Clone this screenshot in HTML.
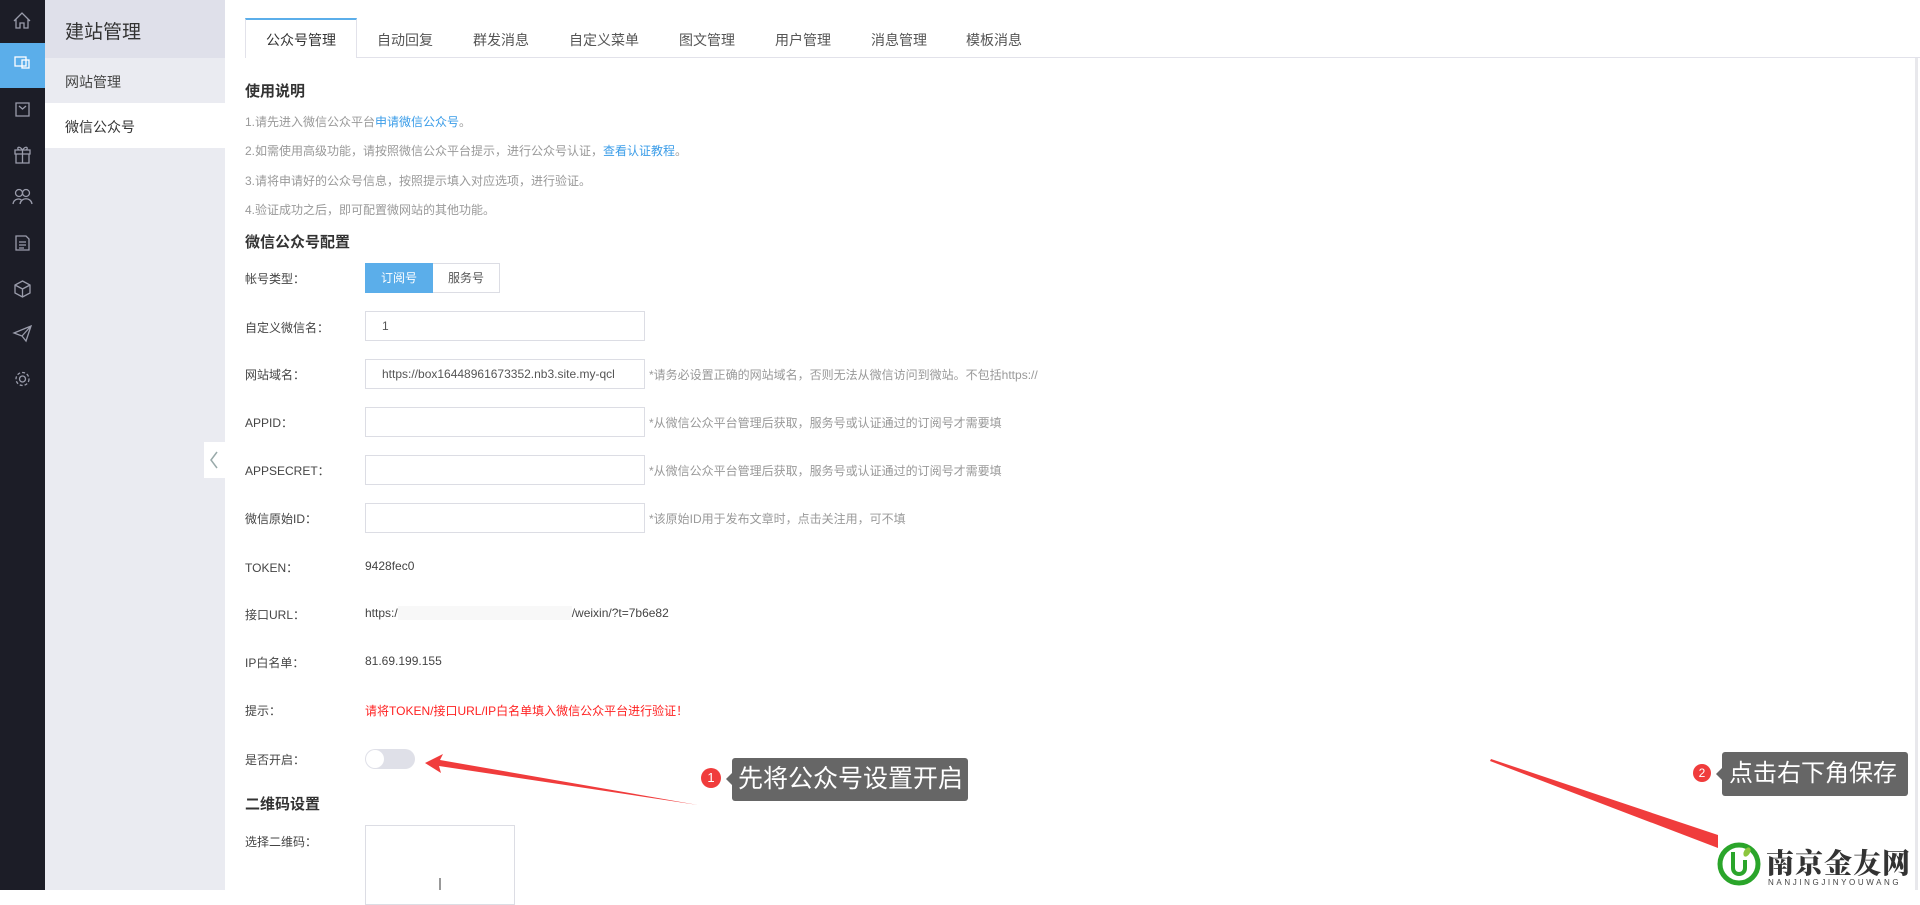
<!DOCTYPE html>
<html><head><meta charset="utf-8"><style>
*{margin:0;padding:0;box-sizing:border-box}
body{width:1920px;height:890px;overflow:hidden;background:#fff;font-family:"Liberation Sans","Noto Sans CJK SC",sans-serif;position:relative;color:#333}
.a{position:absolute}
#dark{left:0;top:0;width:45px;height:890px;background:#1c1d27}
#sub{left:45px;top:0;width:180px;height:890px;background:#eaebf1}
.lab{position:absolute;left:245px;font-size:12px;color:#444}
.inp{position:absolute;left:365px;width:280px;height:30px;border:1px solid #dcdde4;font-size:12px;color:#555;padding-left:16px;line-height:28px}
.tip{position:absolute;left:649px;font-size:12px;color:#999}
.tab{position:absolute;top:30px;font-size:14px;color:#555;transform:translateX(-50%)}
.sec{position:absolute;left:245px;font-size:15px;font-weight:bold;color:#333}
.ln{position:absolute;left:245px;font-size:12px;color:#999}
</style></head><body>
<div class="a" id="dark"></div>
<div class="a" style="left:0;top:43px;width:45px;height:45px;background:#5baeea"></div>
<svg class="a" style="left:0;top:0" width="45" height="400" fill="none" stroke="#9a9cab" stroke-width="1.3">
<path d="M14 21 L22 13 L30 21 M16 19 V28 H20 V23 H24 V28 H28 V19"/>
<rect x="15" y="57" width="11" height="9" stroke="#fff"/><rect x="22" y="60" width="7" height="8" stroke="#fff"/>
<path d="M16 103 H29 V116 H16 Z M19 106 L22.5 109 L26 106"/>
<path d="M15 150 H30 V154 H15 Z M16 154 V163 H29 V154 M22.5 150 V163 M22.5 150 C19 145 16 148 19 150 M22.5 150 C26 145 29 148 26 150"/>
<circle cx="19" cy="193" r="3.5"/><circle cx="26" cy="193" r="3.5"/><path d="M13 204 C14 198 21 198 22 201 M20 204 C21 197 31 197 32 204"/>
<path d="M16 236 H26 L29 239 V250 H16 Z M19 242 H26 M19 245 H26 M19 248 H24"/>
<path d="M22.5 281 L30 285 V293 L22.5 297 L15 293 V285 Z M15 285 L22.5 289 L30 285 M22.5 289 V297"/>
<path d="M14 333 L31 326 L26 341 L22 336 Z M22 336 L31 326"/>
<circle cx="22.5" cy="379" r="3"/><circle cx="22.5" cy="379" r="6.5" stroke-dasharray="3 2"/>
</svg>
<div class="a" id="sub"></div>
<div class="a" style="left:45px;top:0;width:180px;height:58px;background:#dfe0ea"></div>
<div class="a" style="left:65px;top:17px;font-size:19px;color:#333">建站管理</div>
<div class="a" style="left:65px;top:72px;font-size:14px;color:#444">网站管理</div>
<div class="a" style="left:45px;top:103px;width:180px;height:45px;background:#fff"></div>
<div class="a" style="left:65px;top:117px;font-size:14px;color:#333">微信公众号</div>
<div class="a" style="left:204px;top:442px;width:21px;height:36px;background:#fff"></div>
<svg class="a" style="left:208px;top:450px" width="12" height="20"><path d="M9 2 L3 10 L9 18" stroke="#9aa" fill="none" stroke-width="1.5"/></svg>
<div class="a" style="left:245px;top:57px;width:1675px;height:1px;background:#e2e2ea"></div>
<div class="a" style="left:245px;top:18px;width:112px;height:40px;background:#fff;border:1px solid #e2e2ea;border-top:2px solid #5baeea;border-bottom:none"></div>
<div class="tab" style="left:301px;color:#333">公众号管理</div>
<div class="tab" style="left:405px">自动回复</div>
<div class="tab" style="left:501px">群发消息</div>
<div class="tab" style="left:604px">自定义菜单</div>
<div class="tab" style="left:707px">图文管理</div>
<div class="tab" style="left:803px">用户管理</div>
<div class="tab" style="left:899px">消息管理</div>
<div class="tab" style="left:994px">模板消息</div>
<div class="sec" style="top:80px">使用说明</div>
<div class="ln" style="top:113px">1.请先进入微信公众平台<span style="color:#3a9ce8">申请微信公众号</span>。</div>
<div class="ln" style="top:142px">2.如需使用高级功能，请按照微信公众平台提示，进行公众号认证，<span style="color:#3a9ce8">查看认证教程</span>。</div>
<div class="ln" style="top:172px">3.请将申请好的公众号信息，按照提示填入对应选项，进行验证。</div>
<div class="ln" style="top:201px">4.验证成功之后，即可配置微网站的其他功能。</div>
<div class="sec" style="top:231px">微信公众号配置</div>
<div class="lab" style="top:270px">帐号类型：</div>
<div class="a" style="left:365px;top:263px;width:135px;height:30px;border:1px solid #dcdde4;font-size:12px"><div class="a" style="left:-1px;top:-1px;width:68px;height:30px;background:#5baeea;color:#fff;text-align:center;line-height:30px">订阅号</div><div class="a" style="left:67px;top:0;width:66px;text-align:center;line-height:28px;color:#555">服务号</div></div>
<div class="lab" style="top:319px">自定义微信名：</div><div class="inp" style="top:311px">1</div>
<div class="lab" style="top:366px">网站域名：</div><div class="inp" style="top:359px">https://box16448961673352.nb3.site.my-qcl</div><div class="tip" style="top:366px">*请务必设置正确的网站域名，否则无法从微信访问到微站。不包括https://</div>
<div class="lab" style="top:414px">APPID：</div><div class="inp" style="top:407px"></div><div class="tip" style="top:414px">*从微信公众平台管理后获取，服务号或认证通过的订阅号才需要填</div>
<div class="lab" style="top:462px">APPSECRET：</div><div class="inp" style="top:455px"></div><div class="tip" style="top:462px">*从微信公众平台管理后获取，服务号或认证通过的订阅号才需要填</div>
<div class="lab" style="top:510px">微信原始ID：</div><div class="inp" style="top:503px"></div><div class="tip" style="top:510px">*该原始ID用于发布文章时，点击关注用，可不填</div>
<div class="lab" style="top:559px">TOKEN：</div><div class="lab" style="left:365px;top:559px">9428fec0</div>
<div class="lab" style="top:606px">接口URL：</div><div class="lab" style="left:365px;top:606px">https:/<span style="color:#f8f8f8;background:#f8f8f8">xxxxxxxxxxxxxxxxxxxxxxxxxxxxx</span>/weixin/?t=7b6e82</div>
<div class="lab" style="top:654px">IP白名单：</div><div class="lab" style="left:365px;top:654px">81.69.199.155</div>
<div class="lab" style="top:702px">提示：</div><div class="lab" style="left:365px;top:702px;color:#f22">请将TOKEN/接口URL/IP白名单填入微信公众平台进行验证！</div>
<div class="lab" style="top:751px">是否开启：</div>
<div class="a" style="left:365px;top:749px;width:50px;height:20px;border-radius:10px;background:#dfe0e8"><div class="a" style="left:1px;top:1px;width:18px;height:18px;border-radius:50%;background:#fff"></div></div>
<div class="sec" style="top:793px">二维码设置</div>
<div class="lab" style="top:833px">选择二维码：</div>
<div class="a" style="left:365px;top:825px;width:150px;height:80px;border:1px solid #dcdde4"></div>
<div class="a" style="left:439px;top:878px;width:2px;height:12px;background:#999"></div>
<div class="a" style="left:1915px;top:58px;width:3px;height:832px;background:#e8e8ec"></div>
<svg class="a" style="left:0;top:0" width="1920" height="890">
<polygon points="698,805 440,760 443,754 425,763 441,773 439,766" fill="#f03c3c"/>
<polygon points="1491,759 1718,835 1718,848 1490,761" fill="#f03c3c"/>
<circle cx="1739" cy="864" r="19" fill="none" stroke="#2aa52a" stroke-width="5"/>
<path d="M1733 852 V868 C1733 876 1745 876 1745 868 V860" fill="none" stroke="#2aa52a" stroke-width="4"/>
<ellipse cx="1747" cy="852" rx="3" ry="5" fill="#8cc63e" transform="rotate(30 1747 852)"/>
</svg>
<div class="a" style="left:732px;top:758px;width:236px;height:43px;background:#666;border-radius:3px;color:#fff;font-size:25px;line-height:43px;padding-left:6px">先将公众号设置开启</div>
<div class="a" style="left:726px;top:773px;border:6px solid transparent;border-right-color:#666;border-left:0"></div>
<div class="a" style="left:701px;top:768px;width:20px;height:20px;border-radius:50%;background:#f03c3c;color:#fff;font-size:13px;text-align:center;line-height:20px">1</div>
<div class="a" style="left:1722px;top:752px;width:186px;height:44px;background:#666;border-radius:3px;color:#fff;font-size:24px;line-height:44px;padding-left:7px">点击右下角保存</div>
<div class="a" style="left:1716px;top:768px;border:6px solid transparent;border-right-color:#666;border-left:0"></div>
<div class="a" style="left:1693px;top:764px;width:18px;height:18px;border-radius:50%;background:#f03c3c;color:#fff;font-size:12px;text-align:center;line-height:18px">2</div>
<div class="a" style="left:1766px;top:842px;font-family:'Noto Serif CJK SC',serif;font-weight:900;font-size:28px;color:#333;letter-spacing:1px">南京金友网</div>
<div class="a" style="left:1768px;top:878px;font-size:8px;color:#444;letter-spacing:2.6px">NANJINGJINYOUWANG</div>
</body></html>
